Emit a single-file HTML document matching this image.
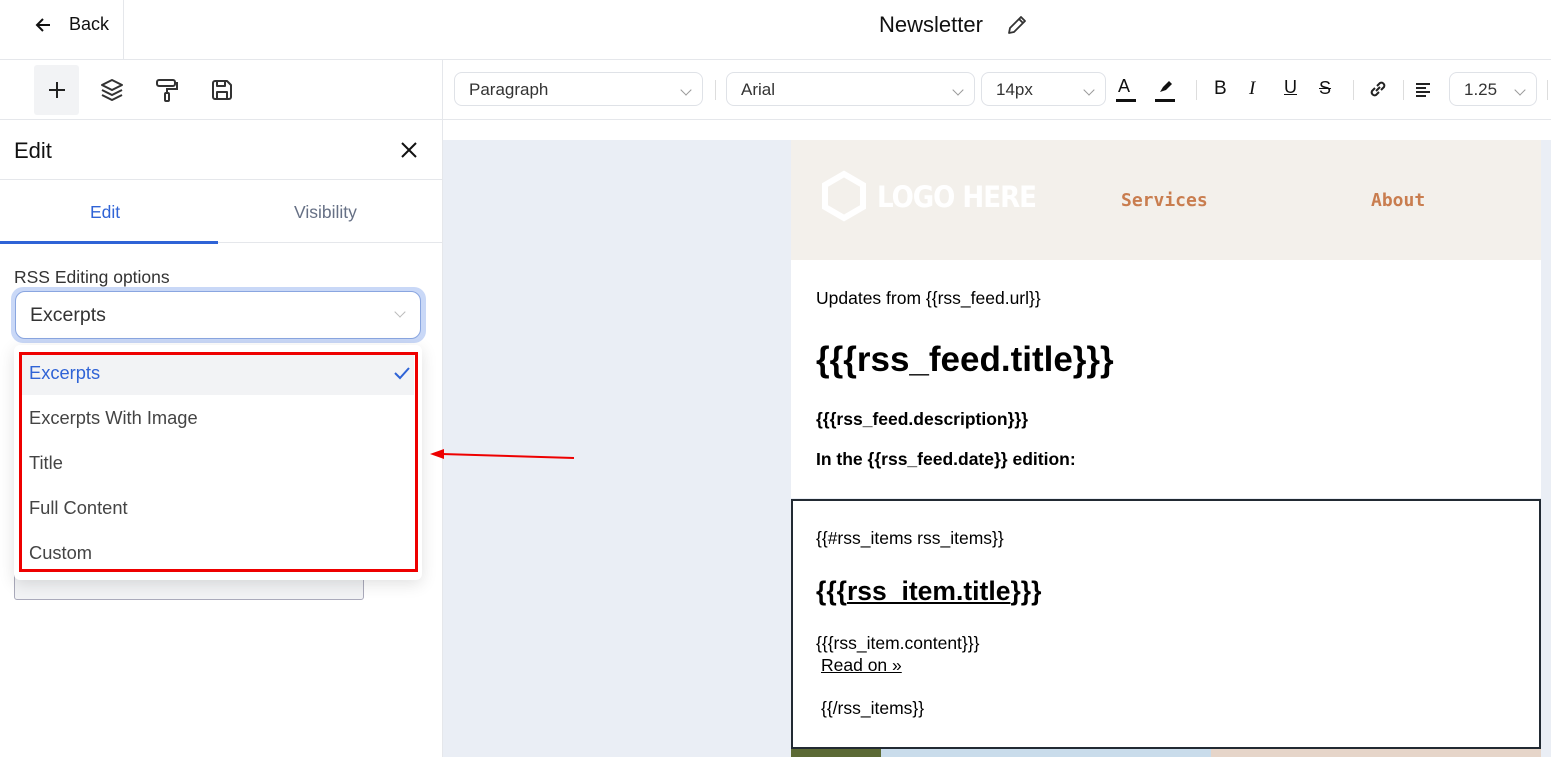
<!DOCTYPE html>
<html><head><meta charset="utf-8"><style>
*{box-sizing:border-box;margin:0;padding:0}
body{width:1551px;height:757px;overflow:hidden;background:#fff;font-family:"Liberation Sans",sans-serif;position:relative;color:#111}
.a{position:absolute}
.sel{position:absolute;top:72px;height:34px;border:1px solid #dfe2e7;border-radius:8px;font-size:17px;color:#333;padding:7px 14px}
.chev{position:absolute;right:12px;top:13px;width:8px;height:8px;border-right:1px solid #999;border-bottom:1px solid #999;transform:rotate(45deg)}
.opt{position:absolute;left:29px;font-size:18.3px;color:#444}
.e{font-family:"Liberation Sans",Arial,sans-serif;color:#000}
</style></head><body>
<div class="a" style="left:0;top:0;width:1551px;height:60px;border-bottom:1px solid #e5e7eb"></div>
<div class="a" style="left:123px;top:0;width:1px;height:60px;background:#e5e7eb"></div>
<svg class="a" style="left:34px;top:15px" width="20" height="20" viewBox="0 0 20 20"><path d="M16 10H4M9 4L3 10L9 16" stroke="#111" stroke-width="2" fill="none"/></svg>
<div class="a" style="left:69px;top:14px;font-size:18px">Back</div>
<div class="a" style="left:879px;top:12px;font-size:22px">Newsletter</div>
<svg class="a" style="left:1005px;top:13px" width="24" height="24" viewBox="0 0 24 24"><path d="M4 20l1-5L16 4l4 4L9 19zM14 6l4 4" stroke="#333" stroke-width="1.8" fill="none" stroke-linejoin="round"/></svg>
<div class="a" style="left:0;top:119px;width:1551px;height:1px;background:#e5e7eb"></div>
<div class="a" style="left:442px;top:60px;width:1px;height:697px;background:#e5e7eb"></div>
<div class="a" style="left:34px;top:65px;width:45px;height:50px;background:#f2f3f5;border-radius:3px"></div>
<svg class="a" style="left:46px;top:79px" width="22" height="22" viewBox="0 0 22 22"><path d="M11 3v16M3 11h16" stroke="#222" stroke-width="2"/></svg>
<svg class="a" style="left:99px;top:77px" width="26" height="26" viewBox="0 0 26 26" fill="none" stroke="#333" stroke-width="2" stroke-linejoin="round"><path d="M13 3L3 8l10 5 10-5zM3 13l10 5 10-5M3 18l10 5 10-5"/></svg>
<svg class="a" style="left:154px;top:77px" width="26" height="26" viewBox="0 0 26 26" fill="none" stroke="#333" stroke-width="2"><rect x="3" y="3" width="18" height="6" rx="2"/><path d="M21 6h2v6h-10v4"/><rect x="11" y="16" width="4" height="8" rx="1"/></svg>
<svg class="a" style="left:209px;top:77px" width="26" height="26" viewBox="0 0 26 26" fill="none" stroke="#333" stroke-width="2" stroke-linejoin="round"><path d="M4 6a2 2 0 012-2h12l4 4v12a2 2 0 01-2 2H6a2 2 0 01-2-2z"/><path d="M8 4v5h8V4M8 22v-7h10v7"/></svg>
<div class="sel" style="left:454px;width:249px">Paragraph<span class="chev"></span></div>
<div class="a" style="left:715px;top:80px;width:1px;height:20px;background:#ddd"></div>
<div class="sel" style="left:726px;width:249px">Arial<span class="chev"></span></div>
<div class="sel" style="left:981px;width:125px">14px<span class="chev"></span></div>
<div class="a" style="left:1118px;top:76px;font-size:18px;color:#111">A</div>
<div class="a" style="left:1116px;top:99px;width:20px;height:3px;background:#111"></div>
<svg class="a" style="left:1156px;top:78px" width="18" height="18" viewBox="0 0 18 18"><path d="M4 14l3-5 6-6 3 3-6 6z" fill="#111"/></svg>
<div class="a" style="left:1155px;top:99px;width:20px;height:3px;background:#111"></div>
<div class="a" style="left:1196px;top:80px;width:1px;height:20px;background:#ddd"></div>
<div class="a" style="left:1214px;top:78px;font-size:19px">B</div>
<div class="a" style="left:1249px;top:78px;font-size:19px;font-style:italic;font-family:'Liberation Serif',serif">I</div>
<div class="a" style="left:1284px;top:77px;font-size:18px;text-decoration:underline">U</div>
<div class="a" style="left:1319px;top:78px;font-size:18px;text-decoration:line-through">S</div>
<div class="a" style="left:1353px;top:80px;width:1px;height:20px;background:#ddd"></div>
<svg class="a" style="left:1367px;top:78px" width="22" height="22" viewBox="0 0 22 22" fill="none" stroke="#222" stroke-width="2"><path d="M9 13l4-4M8 10l-3 3a3 3 0 004 4l3-3M14 12l3-3a3 3 0 00-4-4l-3 3"/></svg>
<div class="a" style="left:1403px;top:80px;width:1px;height:20px;background:#ddd"></div>
<svg class="a" style="left:1414px;top:80px" width="18" height="18" viewBox="0 0 18 18" stroke="#222" stroke-width="2"><path d="M2 4h14M2 8h10M2 12h14M2 16h10"/></svg>
<div class="sel" style="left:1449px;width:88px">1.25<span class="chev"></span></div>
<div class="a" style="left:1547px;top:80px;width:1px;height:20px;background:#ddd"></div>
<div class="a" style="left:443px;top:140px;width:1108px;height:617px;background:#eaeef5"></div>
<div class="a" style="left:791px;top:140px;width:750px;height:120px;background:#f3f0eb"></div>
<svg class="a" style="left:819px;top:170px" width="50" height="52" viewBox="0 0 50 52" fill="none" stroke="#fff" stroke-width="6"><path d="M25 4L44 15v22L25 48 6 37V15z"/></svg>
<div class="a" style="left:877px;top:180px;font-size:29px;font-weight:bold;color:#fff;letter-spacing:-1px;font-family:'DejaVu Sans Condensed','Liberation Sans Narrow',sans-serif">LOGO HERE</div>
<div class="a" style="left:1121px;top:190px;font-size:18px;font-weight:bold;color:#c97d4f;font-family:'DejaVu Sans Mono',monospace">Services</div>
<div class="a" style="left:1371px;top:190px;font-size:18px;font-weight:bold;color:#c97d4f;font-family:'DejaVu Sans Mono',monospace">About</div>
<div class="a" style="left:791px;top:260px;width:750px;height:238px;background:#fff"></div>
<div class="a e" style="left:816px;top:288px;font-size:17.5px">Updates from {{rss_feed.url}}</div>
<div class="a e" style="left:816px;top:340px;font-size:35px;font-weight:bold">{{{rss_feed.title}}}</div>
<div class="a e" style="left:816px;top:409px;font-size:17.5px;font-weight:bold">{{{rss_feed.description}}}</div>
<div class="a e" style="left:816px;top:449px;font-size:17.5px;font-weight:bold">In the {{rss_feed.date}} edition:</div>
<div class="a" style="left:791px;top:748px;width:750px;height:9px;background:linear-gradient(90deg,#5c6a35 0,#5c6a35 90px,#c9dceb 90px,#c9dceb 420px,#e6d5c9 420px)"></div>
<div class="a" style="left:791px;top:499px;width:750px;height:250px;background:#fff;border:2px solid #222a33"></div>
<div class="a e" style="left:816px;top:528px;font-size:17.5px">{{#rss_items rss_items}}</div>
<div class="a e" style="left:816px;top:576px;font-size:26.5px;font-weight:bold">{{{<u>rss_item.title</u>}}}</div>
<div class="a e" style="left:816px;top:633px;font-size:17.5px">{{{rss_item.content}}}</div>
<div class="a e" style="left:821px;top:655px;font-size:17.5px;text-decoration:underline">Read on »</div>
<div class="a e" style="left:821px;top:698px;font-size:17.5px">{{/rss_items}}</div>
<svg class="a" style="left:428px;top:445px" width="150" height="20"><path d="M146 13L14 9" stroke="#e00" stroke-width="2"/><path d="M2 9l14-5v10z" fill="#e00"/></svg>
<div class="a" style="left:14px;top:138px;font-size:22px">Edit</div>
<svg class="a" style="left:399px;top:140px" width="20" height="20" viewBox="0 0 20 20"><path d="M3 3l14 14M17 3L3 17" stroke="#111" stroke-width="2"/></svg>
<div class="a" style="left:0;top:179px;width:442px;height:1px;background:#e5e7eb"></div>
<div class="a" style="left:90px;top:202px;font-size:17.5px;color:#2f63d6">Edit</div>
<div class="a" style="left:294px;top:202px;font-size:17.5px;color:#667085">Visibility</div>
<div class="a" style="left:0;top:242px;width:442px;height:1px;background:#e5e7eb"></div>
<div class="a" style="left:0;top:241px;width:218px;height:3px;background:#2f63d6"></div>
<div class="a" style="left:14px;top:267px;font-size:17.5px;color:#333">RSS Editing options</div>
<div class="a" style="left:11px;top:287px;width:415px;height:56px;border-radius:12px;background:#c9d8f7"></div>
<div class="a" style="left:15px;top:291px;width:406px;height:48px;border:1px solid #8aa6e0;border-radius:10px;background:#fff;font-size:19.5px;color:#333;padding:12px 14px">Excerpts<span class="chev" style="top:16px;right:16px;border-color:#bbb"></span></div>
<div class="a" style="left:14px;top:560px;width:350px;height:40px;border:1px solid #aab;border-radius:3px;background:#f2f3f5"></div>
<div class="a" style="left:14px;top:345px;width:408px;height:235px;background:#fff;border-radius:6px;box-shadow:0 4px 16px rgba(0,0,0,.12)"></div>
<div class="a" style="left:21px;top:353px;width:393px;height:42px;background:#f2f3f5"></div>
<div class="opt" style="top:362px;color:#2f63d6">Excerpts</div>
<svg class="a" style="left:392px;top:364px" width="20" height="18" viewBox="0 0 20 18"><path d="M3 9l5 5L17 4" stroke="#2f63d6" stroke-width="2" fill="none"/></svg>
<div class="opt" style="top:407px">Excerpts With Image</div>
<div class="opt" style="top:452px">Title</div>
<div class="opt" style="top:497px">Full Content</div>
<div class="opt" style="top:542px">Custom</div>
<div class="a" style="left:19px;top:352px;width:399px;height:220px;border:3px solid #e00"></div>
</body></html>
